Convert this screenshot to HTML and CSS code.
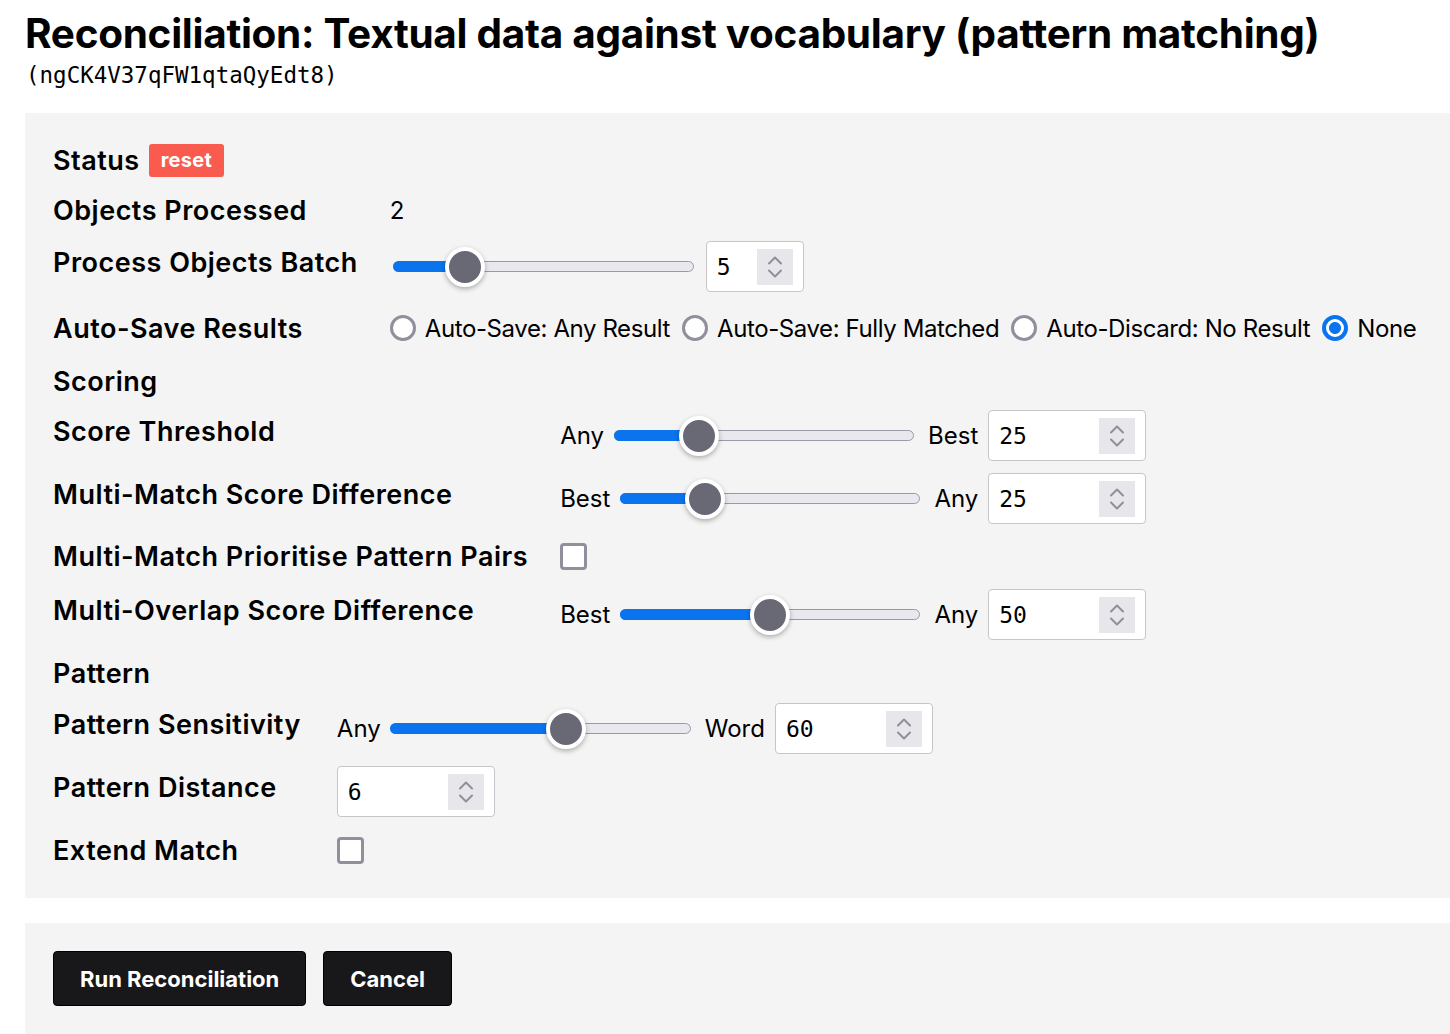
FILE: index.html
```html
<!DOCTYPE html>
<html>
<head>
<meta charset="utf-8">
<link rel="stylesheet" href="styles.css">
</head>
<body>
<div class="page">
  <h1 class="title">Reconciliation: Textual data against vocabulary (pattern matching)</h1>
  <div class="subtitle">(ngCK4V37qFW1qtaQyEdt8)</div>

  <section class="panel">
    <div class="grid g1">
      <div class="lbl">Status <span class="badge">reset</span></div>
      <div class="val"></div>

      <div class="lbl">Objects Processed</div>
      <div class="val text">2</div>

      <div class="lbl up">Process Objects Batch</div>
      <div class="val">
        <div class="range r-batch"><div class="fill" style="width:72px"></div><div class="thumb" style="left:52px"></div></div>
        <div class="num w98"><span>5</span><span class="spin"><svg width="36" height="36" viewBox="0 0 36 36"><path d="M12 14.5 L18 8.5 L24 14.5 M12 21.5 L18 27.5 L24 21.5" fill="none" stroke="#8f8e9a" stroke-width="2" stroke-linecap="round" stroke-linejoin="round"/></svg></span></div>
      </div>

      <div class="lbl">Auto-Save Results</div>
      <div class="val radios">
        <span class="radio"><span class="rc"></span>Auto-Save: Any Result</span>
        <span class="radio"><span class="rc"></span>Auto-Save: Fully Matched</span>
        <span class="radio"><span class="rc"></span>Auto-Discard: No Result</span>
        <span class="radio"><span class="rc on"></span>None</span>
      </div>
    </div>

    <div class="heading h-scoring">Scoring</div>

    <div class="grid g2">
      <div class="lbl up">Score Threshold</div>
      <div class="val">
        <span class="text">Any</span>
        <div class="range"><div class="fill" style="width:85px"></div><div class="thumb" style="left:65px"></div></div>
        <span class="text">Best</span>
        <div class="num w158"><span>25</span><span class="spin"><svg width="36" height="36" viewBox="0 0 36 36"><path d="M12 14.5 L18 8.5 L24 14.5 M12 21.5 L18 27.5 L24 21.5" fill="none" stroke="#8f8e9a" stroke-width="2" stroke-linecap="round" stroke-linejoin="round"/></svg></span></div>
      </div>

      <div class="lbl up">Multi-Match Score Difference</div>
      <div class="val">
        <span class="text">Best</span>
        <div class="range"><div class="fill" style="width:85px"></div><div class="thumb" style="left:65px"></div></div>
        <span class="text">Any</span>
        <div class="num w158"><span>25</span><span class="spin"><svg width="36" height="36" viewBox="0 0 36 36"><path d="M12 14.5 L18 8.5 L24 14.5 M12 21.5 L18 27.5 L24 21.5" fill="none" stroke="#8f8e9a" stroke-width="2" stroke-linecap="round" stroke-linejoin="round"/></svg></span></div>
      </div>

      <div class="lbl">Multi-Match Prioritise Pattern Pairs</div>
      <div class="val"><span class="check"></span></div>

      <div class="lbl up">Multi-Overlap Score Difference</div>
      <div class="val">
        <span class="text">Best</span>
        <div class="range"><div class="fill" style="width:150px"></div><div class="thumb" style="left:130px"></div></div>
        <span class="text">Any</span>
        <div class="num w158"><span>50</span><span class="spin"><svg width="36" height="36" viewBox="0 0 36 36"><path d="M12 14.5 L18 8.5 L24 14.5 M12 21.5 L18 27.5 L24 21.5" fill="none" stroke="#8f8e9a" stroke-width="2" stroke-linecap="round" stroke-linejoin="round"/></svg></span></div>
      </div>
    </div>

    <div class="heading h-pattern">Pattern</div>

    <div class="grid g3">
      <div class="lbl up">Pattern Sensitivity</div>
      <div class="val">
        <span class="text">Any</span>
        <div class="range"><div class="fill" style="width:176px"></div><div class="thumb" style="left:156px"></div></div>
        <span class="text">Word</span>
        <div class="num w158"><span>60</span><span class="spin"><svg width="36" height="36" viewBox="0 0 36 36"><path d="M12 14.5 L18 8.5 L24 14.5 M12 21.5 L18 27.5 L24 21.5" fill="none" stroke="#8f8e9a" stroke-width="2" stroke-linecap="round" stroke-linejoin="round"/></svg></span></div>
      </div>

      <div class="lbl up">Pattern Distance</div>
      <div class="val">
        <div class="num w158"><span>6</span><span class="spin"><svg width="36" height="36" viewBox="0 0 36 36"><path d="M12 14.5 L18 8.5 L24 14.5 M12 21.5 L18 27.5 L24 21.5" fill="none" stroke="#8f8e9a" stroke-width="2" stroke-linecap="round" stroke-linejoin="round"/></svg></span></div>
      </div>

      <div class="lbl">Extend Match</div>
      <div class="val"><span class="check"></span></div>
    </div>
  </section>

  <section class="panel actions">
    <button class="btn">Run Reconciliation</button>
    <button class="btn">Cancel</button>
  </section>
</div>
</body>
</html>
```
FILE: styles.css
```css
html, body {
  margin: 0;
  padding: 0;
  background: #fff;
}
body {
  font-family: Inter, "Noto Sans", sans-serif;
  color: #000;
  overflow: hidden;
}
.page {
  padding-left: 25px;
}
.title {
  margin: 0;
  padding-top: 8px;
  font-size: 40.5px;
  font-weight: 700;
  line-height: 52px;
  letter-spacing: -0.3px;
  white-space: nowrap;
}
.subtitle {
  font-family: "DejaVu Sans Mono", "Liberation Mono", monospace;
  font-size: 22.5px;
  line-height: 30px;
  margin-left: 1px;
  height: 53px;
}
.panel {
  background: #f4f4f4;
  padding: 22px 0 20px 28px;
}
.grid {
  display: grid;
  grid-template-columns: max-content 1fr;
  column-gap: 32px;
  align-items: center;
}
.g1 { grid-template-rows: 50px 50px 63px 60px; }
.g2 { grid-template-rows: 63px 63px 53px 63px; }
.g3 { grid-template-rows: 63px 63px 55px; column-gap: 36px; }
.lbl, .heading {
  font-size: 27px;
  font-weight: 600;
  letter-spacing: 0.5px;
  white-space: nowrap;
  display: flex;
  align-items: center;
}
.lbl.up { margin-bottom: 8px; }
.heading.h-scoring { height: 46px; }
.heading.h-pattern { height: 47px; margin-top: 4px; }
.badge {
  display: inline-block;
  margin-left: 9px;
  background: #f95c4e;
  color: #fff;
  font-size: 20px;
  font-weight: 700;
  letter-spacing: 0.3px;
  line-height: 33px;
  padding: 0 12px;
  border-radius: 3px;
}
.val {
  display: flex;
  align-items: center;
  gap: 10px;
  font-size: 24px;
  white-space: nowrap;
}
.text { font-size: 24px; }
.range {
  position: relative;
  box-sizing: border-box;
  width: 300px;
  height: 11px;
  border: 1.5px solid #9a99a6;
  background: #e9e8ee;
  border-radius: 6px;
  margin: 0 4px 0 0;
}
.range.r-batch {
  margin-left: 4px;
  margin-right: 2px;
}
.fill {
  position: absolute;
  left: -1.5px;
  top: -1.5px;
  height: 11px;
  background: #0a74ef;
  border-radius: 6px;
}
.thumb {
  position: absolute;
  top: 50%;
  box-sizing: border-box;
  width: 40px;
  height: 40px;
  margin-top: -20px;
  margin-left: -1.5px;
  border-radius: 50%;
  background: #696875;
  border: 4px solid #fff;
  box-shadow: 0 2px 5px rgba(0,0,0,0.3);
}
.num {
  box-sizing: border-box;
  height: 51px;
  background: #fff;
  border: 1.5px solid #c6c6ca;
  border-radius: 4px;
  display: flex;
  align-items: center;
  justify-content: space-between;
  padding: 0 10px 0 10px;
  font-family: "DejaVu Sans Mono", "Liberation Mono", monospace;
  font-size: 23px;
}
.w98 { width: 98px; }
.w158 { width: 158px; }
.spin {
  width: 36px;
  height: 36px;
  background: #e7e7eb;
  display: block;
}
.spin svg { display: block; }
.radios { gap: 12px; }
.radio {
  display: inline-flex;
  align-items: center;
  gap: 9px;
  font-size: 24px;
  letter-spacing: -0.4px;
}
.rc {
  box-sizing: border-box;
  width: 26px;
  height: 26px;
  border-radius: 50%;
  border: 3px solid #908f9c;
  background: #fff;
  display: inline-block;
}
.rc.on {
  border: 4px solid #0a74ef;
  background: radial-gradient(circle, #0a74ef 0 5.5px, #fff 6.5px);
}
.check {
  box-sizing: border-box;
  width: 27px;
  height: 27px;
  border: 3px solid #908f9c;
  border-radius: 4px;
  background: #fff;
  display: inline-block;
}
.actions {
  margin-top: 25px;
  padding: 28px 0 40px 28px;
  display: flex;
  gap: 17px;
}
.btn {
  font-family: Inter, "Noto Sans", sans-serif;
  font-size: 22px;
  font-weight: 700;
  letter-spacing: 0;
  color: #fff;
  background: #18181b;
  border: 1px solid #000;
  border-radius: 4px;
  height: 55px;
  padding: 0 26px;
  cursor: pointer;
}
```
